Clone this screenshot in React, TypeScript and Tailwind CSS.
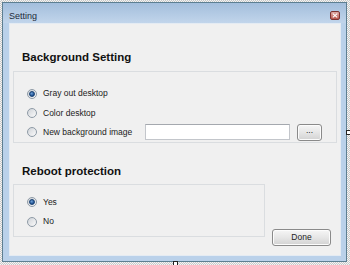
import React from "react";

const F = { fontFamily: '"Liberation Sans", Arial, sans-serif' };

function Radio({ checked }: { checked?: boolean }) {
  return (
    <div className="w-[10px] h-[10px] rounded-full border border-[#8e9aa6] bg-gradient-to-br from-[#cfd3d8] to-[#fbfbfb] flex items-center justify-center shrink-0">
      {checked && (
        <div className="w-[6px] h-[6px] rounded-full bg-[radial-gradient(circle_at_40%_35%,#6d9fd6,#1d4f8f_70%)] border border-[#173f70]" />
      )}
    </div>
  );
}

function WinButton({ children, className }: { children: React.ReactNode; className?: string }) {
  return (
    <div
      className={
        "rounded-[3px] border border-[#8a8a8a] bg-gradient-to-b from-[#f6f6f6] via-[#e6e6e6] to-[#d2d2d2] shadow-[inset_0_0_0_1px_#fcfcfc] flex items-center justify-center text-[8.5px] text-[#222] " +
        (className || "")
      }
    >
      {children}
    </div>
  );
}

export default function App() {
  return (
    <div
      className="w-[350px] h-[265px] overflow-hidden relative bg-[conic-gradient(#c9c9c9_25%,#f4f4f4_0_50%,#c9c9c9_0_75%,#f4f4f4_0)] bg-[length:2px_2px]"
      style={F}
    >
      <div className="ml-[2px] mt-[2px] w-[345px] h-[260px] border border-[#5d7f92] bg-[#bad1ea] flex flex-col">
        {/* title bar */}
        <div className="h-[20px] shrink-0 bg-gradient-to-b from-[#a3bedc] to-[#c1d5eb] flex items-start justify-between pl-[6px] pr-[6px]">
          <span className="mt-[7px] text-[9px] leading-[12px] text-[#1e2b3a]">Setting</span>
          <div className="mt-[8px] w-[10px] h-[9px] rounded-[2px] border border-[#7b3432] bg-gradient-to-b from-[#deaaa6] to-[#b9564f] flex items-center justify-center">
            <svg width="6" height="5" viewBox="0 0 6 5">
              <path d="M0.8 0.6 L5.2 4.4 M5.2 0.6 L0.8 4.4" stroke="#ffffff" strokeWidth="1.2" />
            </svg>
          </div>
        </div>
        {/* client */}
        <div className="flex-1 ml-[6px] mr-[5px] mb-[5px] bg-[#f0f0f0] border border-[#e4ebf3] flex flex-col pl-[3px]">
          <div className="mt-[26px] ml-[9px] text-[11.5px] leading-[14px] font-bold text-[#111]">Background Setting</div>
          <div className="mt-[7px] w-[324px] h-[72px] border border-[#dadde0] flex flex-col pt-[12px] pl-[13px] text-[8.5px] text-[#222]">
            <div className="h-[19.5px] flex items-center gap-[6px]">
              <Radio checked />
              <span>Gray out desktop</span>
            </div>
            <div className="h-[19.5px] flex items-center gap-[6px]">
              <Radio />
              <span>Color desktop</span>
            </div>
            <div className="h-[19.5px] flex items-center gap-[6px]">
              <Radio />
              <span className="w-[96px]">New background image</span>
              <div className="w-[145px] h-[16px] bg-white border border-[#c3c6cb] border-t-[#a4a8ae]" />
              <WinButton className="ml-[1px] w-[25px] h-[17px] pb-[3px]">...</WinButton>
            </div>
          </div>
          <div className="mt-[21px] ml-[9px] text-[11.5px] leading-[14px] font-bold text-[#111]">Reboot protection</div>
          <div className="mt-[6px] flex items-start">
            <div className="w-[252px] h-[53px] border border-[#dadde0] flex flex-col pt-[7.5px] pl-[13px] text-[8.5px] text-[#222]">
              <div className="h-[19.5px] flex items-center gap-[6px]">
                <Radio checked />
                <span>Yes</span>
              </div>
              <div className="h-[19.5px] flex items-center gap-[6px]">
                <Radio />
                <span>No</span>
              </div>
            </div>
            <WinButton className="mt-[45px] ml-[7px] w-[59px] h-[17px]">Done</WinButton>
          </div>
        </div>
      </div>
      {/* designer selection handles */}
      <div className="absolute left-[346px] top-[130px] w-[6px] h-[5px] bg-white border border-[#222]" />
      <div className="absolute left-[173px] top-[261px] w-[5px] h-[6px] bg-white border border-[#222]" />
    </div>
  );
}
